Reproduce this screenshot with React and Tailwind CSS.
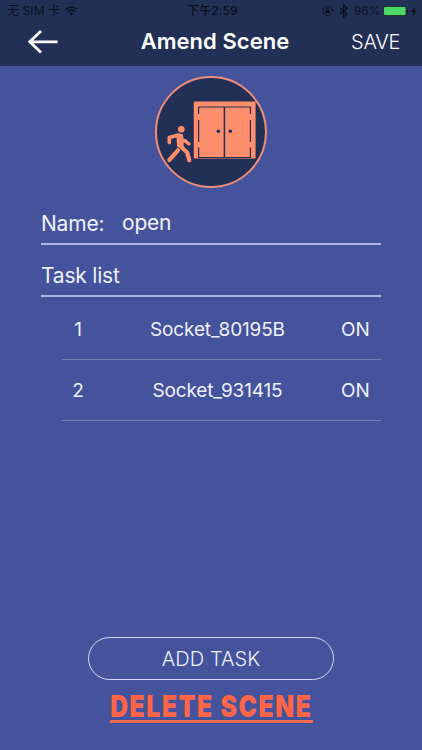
import React from 'react';

const tasks = [
  { id: 1, name: 'Socket_80195B', state: 'ON' },
  { id: 2, name: 'Socket_931415', state: 'ON' },
];

function StatusBar() {
  return (
    <div className="grid grid-cols-3 items-center h-[22px] pl-[7px] pr-[5px] text-[12px] leading-[22px] text-[#0c1120]">
      <div className="flex items-center">
        <span className="tracking-[0.1px] whitespace-nowrap">无 SIM 卡</span>
        <svg className="ml-[5px] w-[13px] h-[10px]" viewBox="0 0 13 10" fill="none" stroke="currentColor" strokeWidth="1.7">
          <path d="M0.8 3.5a8.1 8.1 0 0 1 11.4 0M2.8 5.7a5.2 5.2 0 0 1 7.4 0" />
          <path d="M6.5 9.4L4.5 7.4a2.9 2.9 0 0 1 4 0z" fill="currentColor" stroke="none" />
        </svg>
      </div>
      <span className="pl-[1px] text-center font-medium tracking-[0.1px] whitespace-nowrap">下午2:59</span>
      <div className="flex items-center justify-end">
        {/* Rotation lock */}
        <svg className="w-[12px] h-[12px]" viewBox="0 0 12 12" fill="none" stroke="currentColor" strokeWidth="0.9">
          <path d="M10 8a4.7 4.7 0 1 1 .4-3" />
          <path d="M9 5h3l-1.5 2z" fill="currentColor" stroke="none" />
          <rect x="3.6" y="5.2" width="4.2" height="3.2" fill="currentColor" stroke="none" />
          <path d="M4.4 5.5V4.3a1.3 1.3 0 0 1 2.6 0v1.2" />
        </svg>
        {/* Bluetooth */}
        <svg className="ml-[5px] w-[9px] h-[14px]" viewBox="0 0 9 14" fill="none" stroke="currentColor" strokeWidth="1.3">
          <path d="M1 4l7 6-3.5 3V1L8 4l-7 6" />
        </svg>
        <span className="ml-[6px] tracking-[-0.2px]">96%</span>
        <svg className="ml-[3px] w-[26px] h-[10px]" viewBox="0 0 26 10">
          <rect x="0.5" y="0.5" width="22.5" height="9" rx="1.5" fill="#4cd964" stroke="#18251f" strokeWidth="0.8" />
          <path d="M24 3.2a2 2 0 0 1 0 3.6z" fill="currentColor" />
        </svg>
        <svg className="ml-[2px] w-[6px] h-[9px]" viewBox="0 0 6 9" fill="currentColor">
          <path d="M4 0L0 5h2.5L1.6 9 6 3.7H3.4z" />
        </svg>
      </div>
    </div>
  );
}

function NavBar() {
  return (
    <div className="flex items-center justify-between h-[44px] pl-[28px] pr-[22px] pb-[5px] text-white">
      <button className="w-[82px]" title="Back">
        <svg className="w-[31px] h-[24px]" viewBox="0 0 31 24" fill="none" stroke="currentColor" strokeWidth="2.8">
          <path d="M29.5 11.8H2M13 1L1.8 11.8 13 22.6" />
        </svg>
      </button>
      <h1 className="text-[22px] font-semibold tracking-[0.05px] whitespace-nowrap">Amend Scene</h1>
      <button className="w-[80px] text-right text-[20px] font-light tracking-[-0.3px] whitespace-nowrap">SAVE</button>
    </div>
  );
}

function SceneIcon() {
  return (
    <svg className="w-[114px] h-[114px]" viewBox="0 0 114 114">
      <circle cx="57" cy="57" r="55" fill="#223056" stroke="#ef8d7b" strokeWidth="2" />
      {/* Double door */}
      <path d="M39.8 26.5h61.8v57H39.8z" fill="#ff8e6d" />
      <g fill="none" stroke="#223056" strokeWidth="1.2">
        <path d="M44.6 39v-7h51.8v7M44.6 45v22M44.6 72.5v10h51.8v-10M96.4 45v22" />
        <path d="M70.4 32v50.5" strokeWidth="1.5" />
      </g>
      <circle cx="64.3" cy="56.3" r="1.8" fill="#223056" />
      <circle cx="76.3" cy="56.3" r="1.8" fill="#223056" />
      {/* Walking figure */}
      <g fill="none" stroke="#ff8e6d" strokeLinecap="round" strokeLinejoin="round">
        <circle cx="27.3" cy="54.3" r="3.3" fill="#ff8e6d" stroke="none" />
        <path d="M24.4 60L15.3 62.4v5.4" strokeWidth="3.6" />
        <path d="M30.8 65.6l4.2 3.4" strokeWidth="3.4" />
        <path d="M23.5 60h4.2l1 5-.4 6.2h-4z" fill="#ff8e6d" strokeWidth="2.4" />
        <path d="M24 75.3L15.3 85" strokeWidth="4.2" />
        <path d="M27.6 72.3l5.6 5.2 2.1 7.7" strokeWidth="4.2" />
      </g>
    </svg>
  );
}

function TaskRow({ task }) {
  return (
    <div className="flex items-center h-[61px] border-b border-[#7480b8] pt-[2px] text-[19px] tracking-[-0.15px]">
      <span className="w-[32px] text-center">{task.id}</span>
      <span className="flex-1 pl-[10px] text-center">{task.name}</span>
      <span className="w-[50px] pl-[10px]">{task.state}</span>
    </div>
  );
}

export default function App() {
  return (
    <div className="flex flex-col w-full h-[750px] overflow-hidden bg-[#44539b] text-[#eef1fd] font-normal font-[Inter,'Noto_Sans_CJK_SC',sans-serif]">
      <header className="bg-[#223056]">
        <StatusBar />
        <NavBar />
      </header>

      <main className="flex flex-1 flex-col px-[41px] pt-[9px]">
        <div className="flex justify-center">
          <SceneIcon />
        </div>

        <div className="flex items-center h-[56px] pt-[16px] border-b-2 border-[#adb6df] text-[21px] tracking-[-0.2px]">
          <span className="w-[81px]">Name:</span>
          <span className="pb-[3px]">open</span>
        </div>
        <div className="flex items-center h-[52px] pt-[12px] border-b-2 border-[#adb6df] text-[21px] tracking-[-0.2px]">
          Task list
        </div>

        <div className="flex flex-col pl-[21px] pt-[2px]">
          {tasks.map((task) => (
            <TaskRow key={task.id} task={task} />
          ))}
        </div>
      </main>

      <footer className="flex flex-col items-center pb-[27px]">
        <button className="w-[246px] h-[43px] rounded-full border-[1.5px] border-[#d5dbf4] text-[20px] font-light tracking-[0.1px]">
          ADD TASK
        </button>
        <button className="mt-[12px] w-[203px] h-[31px] flex justify-center border-b-[3px] border-[#f4694f] text-[30px] leading-[28px] font-black tracking-[2px] text-[#ff6546] whitespace-nowrap">
          <span className="inline-block scale-x-[0.82]">DELETE SCENE</span>
        </button>
      </footer>
    </div>
  );
}
